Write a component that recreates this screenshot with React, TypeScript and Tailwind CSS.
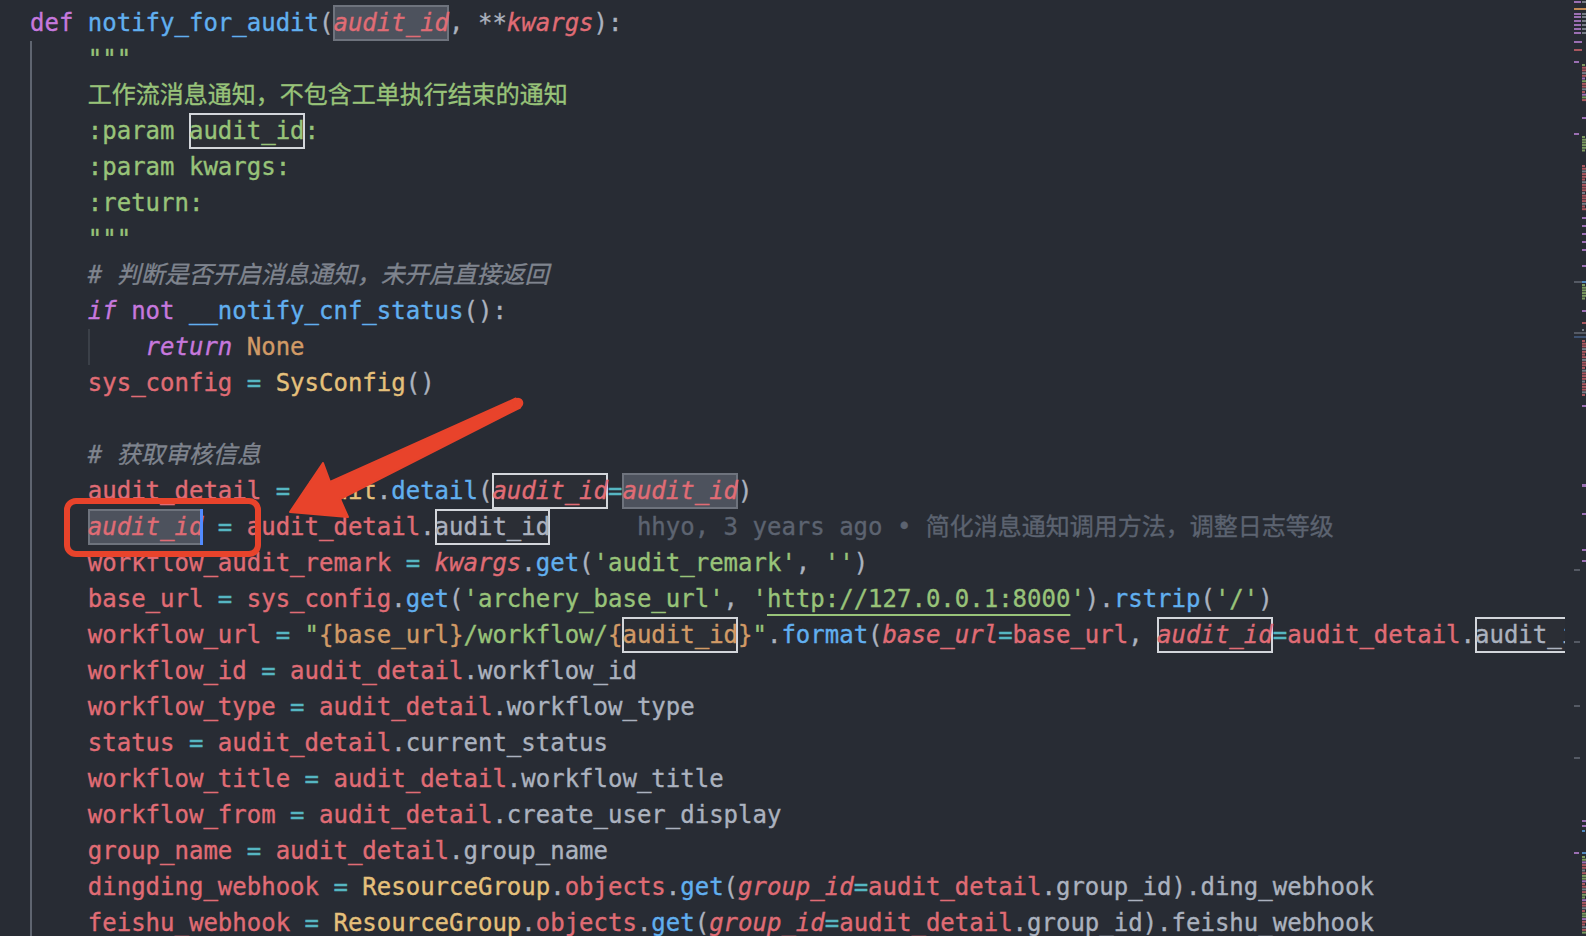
import React from 'react';

type Tok = {
  t: string;
  c?: string;
  h?: 'box' | 'sel';
  cursor?: boolean;
  u?: boolean;
};

type Line = { indent: number; toks: Tok[] };

// token colours (One Dark)
const K = 'text-[#c678dd]';
const KI = 'text-[#c678dd] italic';
const F = 'text-[#61afef]';
const V = 'text-[#e06c75]';
const VI = 'text-[#e06c75] italic';
const O = 'text-[#56b6c2]';
const S = 'text-[#98c379]';
const C = 'text-[#7f848e] italic';
const N = 'text-[#d19a66]';
const Y = 'text-[#e5c07b]';
const P = 'text-[#abb2bf]';
const B = 'text-[#5c6370]';

const tk = (t: string, c?: string, extra: Partial<Tok> = {}): Tok => ({ t, c, ...extra });
const eq: Tok = tk(' = ', O);

const attrLine = (name: string, attr: string): Line => ({
  indent: 1,
  toks: [tk(name, V), eq, tk('audit_detail', V), tk('.', P), tk(attr, P)],
});

const webhookLine = (name: string, attr: string): Line => ({
  indent: 1,
  toks: [
    tk(name, V),
    eq,
    tk('ResourceGroup', Y),
    tk('.', P),
    tk('objects', V),
    tk('.', P),
    tk('get', F),
    tk('(', P),
    tk('group_id', VI),
    tk('=', O),
    tk('audit_detail', V),
    tk('.', P),
    tk('group_id', P),
    tk(').', P),
    tk(attr, P),
  ],
});

const lines: Line[] = [
  {
    indent: 0,
    toks: [
      tk('def', K),
      tk(' '),
      tk('notify_for_audit', F),
      tk('(', P),
      tk('audit_id', VI, { h: 'sel' }),
      tk(', **', P),
      tk('kwargs', VI),
      tk('):', P),
    ],
  },
  { indent: 1, toks: [tk('"""', S)] },
  { indent: 1, toks: [tk('工作流消息通知，不包含工单执行结束的通知', S)] },
  { indent: 1, toks: [tk(':param ', S), tk('audit_id', S, { h: 'box' }), tk(':', S)] },
  { indent: 1, toks: [tk(':param kwargs:', S)] },
  { indent: 1, toks: [tk(':return:', S)] },
  { indent: 1, toks: [tk('"""', S)] },
  { indent: 1, toks: [tk('# 判断是否开启消息通知，未开启直接返回', C)] },
  {
    indent: 1,
    toks: [tk('if', KI), tk(' '), tk('not', K), tk(' '), tk('__notify_cnf_status', F), tk('():', P)],
  },
  { indent: 2, toks: [tk('return', KI), tk(' '), tk('None', N)] },
  { indent: 1, toks: [tk('sys_config', V), eq, tk('SysConfig', Y), tk('()', P)] },
  { indent: 1, toks: [] },
  { indent: 1, toks: [tk('# 获取审核信息', C)] },
  {
    indent: 1,
    toks: [
      tk('audit_detail', V),
      eq,
      tk('Audit', Y),
      tk('.', P),
      tk('detail', F),
      tk('(', P),
      tk('audit_id', VI, { h: 'box' }),
      tk('=', O),
      tk('audit_id', VI, { h: 'sel' }),
      tk(')', P),
    ],
  },
  {
    indent: 1,
    toks: [
      tk('audit_id', VI, { h: 'sel', cursor: true }),
      eq,
      tk('audit_detail', V),
      tk('.', P),
      tk('audit_id', P, { h: 'box' }),
      tk('      hhyo, 3 years ago • 简化消息通知调用方法，调整日志等级', B),
    ],
  },
  {
    indent: 1,
    toks: [
      tk('workflow_audit_remark', V),
      eq,
      tk('kwargs', VI),
      tk('.', P),
      tk('get', F),
      tk('(', P),
      tk("'audit_remark'", S),
      tk(', ', P),
      tk("''", S),
      tk(')', P),
    ],
  },
  {
    indent: 1,
    toks: [
      tk('base_url', V),
      eq,
      tk('sys_config', V),
      tk('.', P),
      tk('get', F),
      tk('(', P),
      tk("'archery_base_url'", S),
      tk(', ', P),
      tk("'", S),
      tk('http://127.0.0.1:8000', S, { u: true }),
      tk("'", S),
      tk(').', P),
      tk('rstrip', F),
      tk('(', P),
      tk("'/'", S),
      tk(')', P),
    ],
  },
  {
    indent: 1,
    toks: [
      tk('workflow_url', V),
      eq,
      tk('"', S),
      tk('{base_url}', N),
      tk('/workflow/', S),
      tk('{', N),
      tk('audit_id', N, { h: 'box' }),
      tk('}', N),
      tk('"', S),
      tk('.', P),
      tk('format', F),
      tk('(', P),
      tk('base_url', VI),
      tk('=', O),
      tk('base_url', V),
      tk(', ', P),
      tk('audit_id', VI, { h: 'box' }),
      tk('=', O),
      tk('audit_detail', V),
      tk('.', P),
      tk('audit_id)', P, { h: 'box' }),
    ],
  },
  attrLine('workflow_id', 'workflow_id'),
  attrLine('workflow_type', 'workflow_type'),
  attrLine('status', 'current_status'),
  attrLine('workflow_title', 'workflow_title'),
  attrLine('workflow_from', 'create_user_display'),
  attrLine('group_name', 'group_name'),
  webhookLine('dingding_webhook', 'ding_webhook'),
  webhookLine('feishu_webhook', 'feishu_webhook'),
];

function Token({ tok }: { tok: Tok }) {
  if (tok.h === 'box') {
    return (
      <span className={`inline-block h-[36px] align-top bg-[#2b2e35] shadow-[inset_0_0_0_2px_#d3d6db] ${tok.c ?? ''}`}>
        {tok.t}
      </span>
    );
  }
  if (tok.h === 'sel') {
    return (
      <span className={`inline-block h-[36px] align-top bg-[#4d525d] shadow-[inset_0_0_0_2px_#6e737d] ${tok.c ?? ''}`}>
        {tok.t}
        {tok.cursor && <span className="inline-block w-[3px] h-[36px] -ml-[3px] align-top bg-[#528bff]" />}
      </span>
    );
  }
  if (tok.u) {
    return (
      <span className={`underline decoration-2 underline-offset-[7px] decoration-[#98c379] ${tok.c ?? ''}`}>
        {tok.t}
      </span>
    );
  }
  return <span className={tok.c ?? 'text-[#abb2bf]'}>{tok.t}</span>;
}

function CodeLine({ line }: { line: Line }) {
  return (
    <div className="flex h-[36px] leading-[36px] whitespace-pre">
      {Array.from({ length: line.indent }).map((_, i) => (
        <span
          key={i}
          className={`inline-block w-[4ch] h-[36px] shrink-0 ${
            i === 0 ? 'shadow-[inset_2px_0_0_#5f6570]' : 'shadow-[inset_2px_0_0_#3b4048]'
          }`}
        />
      ))}
      <span>
        {line.toks.map((tok, i) => (
          <Token key={i} tok={tok} />
        ))}
      </span>
    </div>
  );
}

// minimap rows: [y, x, w, colour]
const pu = '#9b6fb3';
const rd = '#a9575f';
const gn = '#7b995f';
const gy = '#767c86';
const bl = '#5389bd';
const hl = '#555a64';

const mini: [number, number, number, string][] = [];
const body = (from: number, to: number, cols: string[]) => {
  let i = 0;
  for (let y = from; y <= to; y += 2.7) {
    mini.push([y, 17, 3 + ((i * 7) % 5), cols[i % cols.length]]);
    i++;
  }
};
[1, 13, 16, 20, 24, 28, 32].forEach((y) => {
  mini.push([y, 9, 7, pu]);
  mini.push([y, 17, 4, gy]);
});
mini.push([8, 9, 12, '#c28a55']);
mini.push([41, 9, 8, pu]);
mini.push([49, 9, 8, rd]);
mini.push([61, 9, 5, pu]);
body(64, 101, [gn, rd, rd, gy, rd, pu]);
mini.push([117, 17, 4, pu]);
mini.push([133, 9, 5, pu]);
body(136, 152, [gn]);
body(165, 210, [rd, rd, gy, rd]);
[217, 225, 233, 241, 249, 265].forEach((y) => mini.push([y, 17, 4, pu]));
mini.push([281, 9, 8, hl]);
mini.push([281, 17, 4, bl]);
body(284, 300, [gn]);
mini.push([310, 17, 4, pu]);
mini.push([322, 17, 4, rd]);
mini.push([329, 17, 2, gy]);
mini.push([332, 9, 12, hl]);
mini.push([336, 9, 12, '#3e5271']);
body(340, 395, [rd, rd, rd, gy]);
[405, 484, 485, 513, 549, 560].forEach((y) => mini.push([y, 17, 4, pu]));
[569, 641, 705, 757].forEach((y) => mini.push([y, 9, 6, hl]));
[820, 825].forEach((y) => mini.push([y, 17, 4, pu]));
mini.push([830, 17, 3, bl]);
mini.push([852, 9, 5, pu]);
mini.push([852, 17, 4, bl]);
body(856, 932, [gn, gn, pu, rd, rd, gy, rd]);

function Minimap() {
  return (
    <div className="w-[21px] h-[936px] shrink-0 bg-[#282c34]">
      <svg width="21" height="936" viewBox="0 0 21 936">
        {mini.map(([y, x, w, c], i) => (
          <rect key={i} x={x} y={y} width={Math.min(w, 21 - x)} height={2} fill={c} />
        ))}
      </svg>
    </div>
  );
}

function Annotation() {
  return (
    <svg className="absolute inset-0 pointer-events-none" width="1586" height="936" viewBox="0 0 1586 936">
      <rect x="67" y="501" width="191" height="53" rx="9" fill="none" stroke="#e8432b" strokeWidth="6" />
      <polygon
        points="515.8,398.5 330,482 323,463 290,512 348,517 340,499 520.2,407.5"
        fill="#e8432b"
        stroke="#e8432b"
        strokeWidth="2"
        strokeLinejoin="round"
      />
      <circle cx="518" cy="403" r="5.3" fill="#e8432b" />
    </svg>
  );
}

export default function App() {
  return (
    <div className="relative flex w-[1586px] h-[936px] overflow-hidden bg-[#282c34] font-['DejaVu_Sans_Mono','Noto_Sans_CJK_SC',monospace] text-[24px] [-webkit-text-stroke-width:0.35px]">
      <div className="flex-1 min-w-0 overflow-hidden pt-[5px] pl-[30px]">
        {lines.map((line, i) => (
          <CodeLine key={i} line={line} />
        ))}
      </div>
      <Minimap />
      <Annotation />
    </div>
  );
}
